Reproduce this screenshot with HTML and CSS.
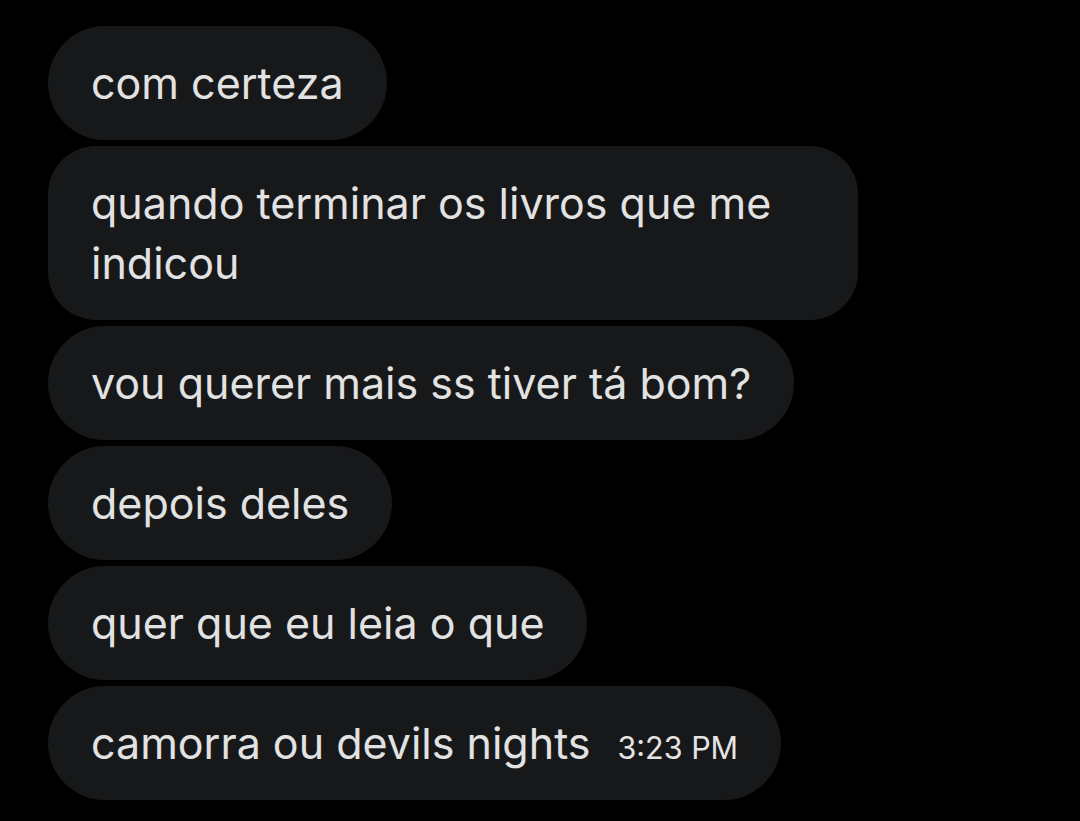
FILE: index.html
```html
<!DOCTYPE html>
<html lang="pt">
<head>
<meta charset="utf-8">
<link rel="stylesheet" href="styles.css">
</head>
<body>
<div class="chat">
  <div class="bubble"><span class="text">com certeza</span></div>
  <div class="bubble multi"><span class="text">quando terminar os livros que me indicou</span></div>
  <div class="bubble"><span class="text">vou querer mais ss tiver tá bom?</span></div>
  <div class="bubble"><span class="text">depois deles</span></div>
  <div class="bubble"><span class="text">quer que eu leia o que</span></div>
  <div class="bubble"><span class="text">camorra ou devils nights</span><span class="time">3:23 PM</span></div>
</div>
</body>
</html>
```
FILE: styles.css
```css
html, body {
  margin: 0;
  background: #000;
  height: 100%;
}
.chat {
  display: flex;
  flex-direction: column;
  align-items: flex-start;
  gap: 6px;
  padding: 26px 0 0 48px;
  font-family: Inter, Roboto, sans-serif;
  color: #e2e2e2;
}
.bubble {
  box-sizing: border-box;
  max-width: 810px;
  background: #17181a;
  border-radius: 57px;
  padding: 27px 43px 27px 43px;
  display: flex;
  align-items: baseline;
  gap: 27px;
}
.bubble.multi {
  border-radius: 48px;
}
.text {
  font-size: 43px;
  line-height: 60px;
}
.time {
  flex-shrink: 0;
  font-size: 30.5px;
  color: #e4e4e4;
}
```
